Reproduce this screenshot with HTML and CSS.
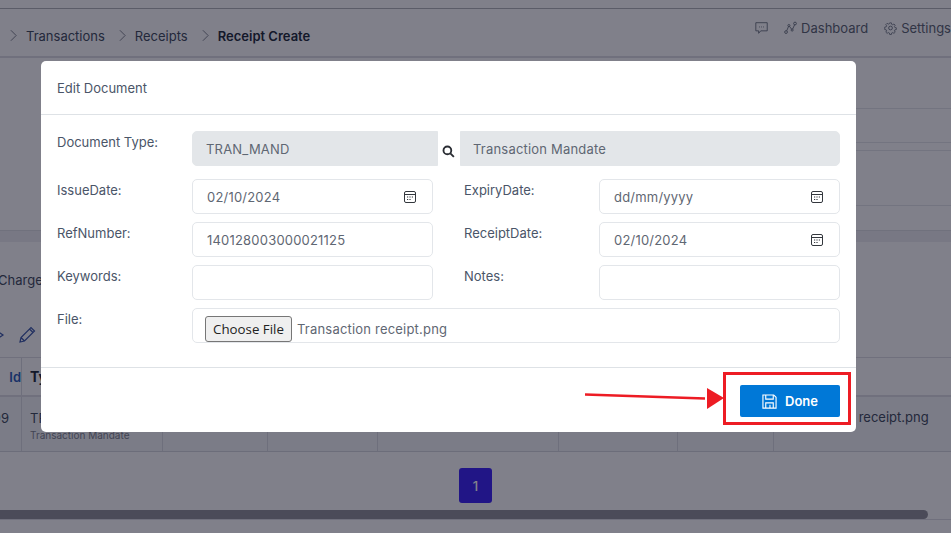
FILE: index.html
```html
<!DOCTYPE html>
<html lang="en">
<head>
<meta charset="utf-8">
<title>Receipt Create</title>
<link rel="stylesheet" href="styles.css">
</head>
<body>
<div class="page">
  <div class="topstrip"></div>
  <header class="crumbbar">
    <nav class="crumbs">
      <svg class="chev" viewBox="0 0 8 14"><path d="M1 1l6 6-6 6"/></svg><span>Transactions</span>
      <svg class="chev" viewBox="0 0 8 14"><path d="M1 1l6 6-6 6"/></svg><span>Receipts</span>
      <svg class="chev" viewBox="0 0 8 14"><path d="M1 1l6 6-6 6"/></svg><b>Receipt Create</b>
    </nav>
    <div class="tools">
      <svg class="tool chat" viewBox="0 0 16 16"><path d="M1 1.5h14v10H7l-2.5 3v-3H1z"/><path d="M5 6.700h1M7.500 6.700h1M10 6.700h1"/></svg>
      <svg class="tool dash" viewBox="0 0 16 16"><circle cx="2.500" cy="13" r="1.700"/><circle cx="13.500" cy="2.500" r="1.700"/><circle cx="6" cy="5" r="1.300"/><circle cx="10" cy="10.500" r="1.300"/><path d="M3.300 11.500L5.500 6.200M6.700 6l2.700 3.500M10.600 9.300l2.400-5.200"/></svg>
      <span>Dashboard</span>
      <svg class="tool gear" viewBox="0 0 16 16"><circle cx="8" cy="8" r="2.300"/><path d="M6.800 1h2.400l.4 2 1.400.6 1.700-1.100 1.700 1.700-1.100 1.700.6 1.400 2 .4v2.400l-2 .4-.6 1.400 1.100 1.700-1.700 1.700-1.700-1.100-1.400.6-.4 2H6.800l-.4-2-1.400-.6-1.700 1.100-1.700-1.700 1.100-1.700-.6-1.400-2-.4V6.800l2-.4.6-1.400-1.100-1.700 1.700-1.700 1.700 1.100 1.400-.6z" transform="translate(.8 .8) scale(.9)"/></svg>
      <span class="nowrap">Settings</span>
    </div>
  </header>
  <section class="formsec">
    <div class="fline h1"></div>
    <div class="fline h2"></div>
    <div class="fline h3"></div>
    <div class="fline h4"><span class="clip-label">Location:</span></div>
    <div class="h5"></div>
  </section>
  <div class="band"></div>
  <section class="lower">
    <div class="tabs"><span>Charges</span></div>
    <div class="actions">
      <svg class="chevsmall" viewBox="0 0 6 10"><path d="M-3 1l6 4-6 4"/></svg>
      <svg class="pencil" viewBox="0 0 18 18"><path d="M2 16l1-4.500L13 1.500l3.500 3.500-10 10zM11.500 3l3.500 3.500M3 11.500L6.500 15"/></svg>
    </div>
    <div class="grid">
      <div class="trow thead">
        <div class="cell idc"><a>Id</a></div><div class="cell type"><b>Type</b></div><div class="cell"></div><div class="cell"></div><div class="cell"></div><div class="cell"></div><div class="cell"></div><div class="cell last"></div>
      </div>
      <div class="trow tbody">
        <div class="cell idc">1099</div><div class="cell type">TRAN_MAND<small>Transaction Mandate</small></div><div class="cell"></div><div class="cell"></div><div class="cell"></div><div class="cell"></div><div class="cell"></div><div class="cell last fname">Transaction receipt.png</div>
      </div>
    </div>
    <div class="pager"><span class="pg">1</span></div>
    <div class="scroll"><div class="thumb"></div></div>
  </section>
</div>

<div class="overlay"></div>

<div class="modal">
  <div class="mhead">Edit Document</div>
  <div class="mbody">
    <div class="frow first">
      <label class="lbl">Document Type:</label>
      <input class="inp ro code" value="TRAN_MAND" readonly>
      <svg class="search" viewBox="0 0 14 14"><circle cx="5.800" cy="5.800" r="4.200"/><path d="M9 9l3.800 3.800"/></svg>
      <input class="inp ro desc" value="Transaction Mandate" readonly>
    </div>
    <div class="frow">
      <label class="lbl">IssueDate:</label>
      <div class="inp field"><span>02/10/2024</span><svg class="cal" viewBox="0 0 14 14"><rect x="1.500" y="1.500" width="11" height="11" rx="1.500"/><path d="M1.500 4.500h11"/><path class="dots" d="M4 7h1.200M6.400 7h1.200M8.800 7H10M4 9.500h1.200M6.400 9.500h1.200"/></svg></div>
      <label class="lbl right">ExpiryDate:</label>
      <div class="inp field narrow"><span>dd/mm/yyyy</span><svg class="cal" viewBox="0 0 14 14"><rect x="1.500" y="1.500" width="11" height="11" rx="1.500"/><path d="M1.500 4.500h11"/><path class="dots" d="M4 7h1.200M6.400 7h1.200M8.800 7H10M4 9.500h1.200M6.400 9.500h1.200"/></svg></div>
    </div>
    <div class="frow">
      <label class="lbl">RefNumber:</label>
      <input class="inp text" value="140128003000021125">
      <label class="lbl right">ReceiptDate:</label>
      <div class="inp field narrow"><span>02/10/2024</span><svg class="cal" viewBox="0 0 14 14"><rect x="1.500" y="1.500" width="11" height="11" rx="1.500"/><path d="M1.500 4.500h11"/><path class="dots" d="M4 7h1.200M6.400 7h1.200M8.800 7H10M4 9.500h1.200M6.400 9.500h1.200"/></svg></div>
    </div>
    <div class="frow">
      <label class="lbl">Keywords:</label>
      <input class="inp text">
      <label class="lbl right">Notes:</label>
      <input class="inp text narrow">
    </div>
    <div class="frow">
      <label class="lbl">File:</label>
      <div class="inp file"><button class="choose" type="button">Choose File</button><span>Transaction receipt.png</span></div>
    </div>
  </div>
  <div class="mfoot">
    <button class="done" type="button">
      <svg class="disk" viewBox="0 0 16 16"><path d="M1 1h11.500L15 3.500V15H1z"/><path d="M4 1v4.500h8V1M4 15V9.500h8V15M8.500 11.500V15"/></svg>
      Done
    </button>
  </div>
</div>

<div class="redbox"></div>
<svg class="arrow" viewBox="0 0 140 24"><path d="M0 6.500L120 10.500" /><polygon points="122,0 139,10 122,21"/></svg>
</body>
</html>
```

FILE: styles.css
```css
* { box-sizing: border-box; }
html, body { margin: 0; height: 100%; }
body { width: 951px; height: 533px; overflow: hidden; position: relative; font-family: Inter, "Liberation Sans", sans-serif; font-size: 13px; color: #3f4a5f; background: #f8f9fd; }
.page { width: 951px; height: 533px; overflow: hidden; }

.topstrip { height: 9px; border-bottom: 1px solid #aeb0b8; }
.crumbbar { height: 49px; border-bottom: 2px solid #d8d9e2; display: flex; justify-content: space-between; padding: 0 0 0 10px; position: relative; }
.crumbs { display: flex; align-items: center; height: 47px; margin-top: 3px; font-size: 13px; }
.crumbs span { margin: 0 14px 0 9px; }
.crumbs b { margin-left: 9px; font-weight: 600; color: #1f2a3d; }
.chev { width: 7px; height: 13px; fill: none; stroke: #6f7482; stroke-width: 1; }
.tools { display: flex; align-items: center; height: 47px; margin-top: -5px; white-space: nowrap; width: 196px; margin-right: 0; color: #5a6273; }
.tool { width: 16px; height: 16px; fill: none; stroke: #5a6273; stroke-width: 1; }
.chat { margin-right: 16px; }
.dash { margin-right: 4px; }
.gear { margin-left: 16px; margin-right: 4px; }
.nowrap { white-space: nowrap; }

.formsec { height: 173px; border-bottom: 1px solid #d9dae3; display: flex; flex-direction: column; }
.fline { border-bottom: 1px solid #dfe0e8; margin-left: 500px; }
.h1 { height: 51px; }
.h2 { height: 34px; }
.h3 { height: 9px; }
.h4 { height: 55px; position: relative; }
.h5 { height: 24px; }
.clip-label { display: none; }
.band { height: 11px; background: #e9e9f0; }

.lower { height: 291px; display: flex; flex-direction: column; }
.tabs { height: 60px; overflow: hidden; padding: 30px 0 0; }
.tabs span { display: block; margin-left: -2px; }
.actions { height: 55px; display: flex; align-items: center; padding-top: 11px; }
.chevsmall { width: 6px; height: 10px; fill: none; stroke: #3a56a8; stroke-width: 1.200; }
.pencil { width: 18px; height: 18px; margin-left: 12px; fill: none; stroke: #3a56a8; stroke-width: 1.200; }
.grid { border-top: 1px solid #d8d9e2; }
.trow { display: grid; grid-template-columns: 22px 141px 105px 110px 181px 119px 96px 177px; }
.thead { height: 39px; border-bottom: 2px solid #d8d9e2; }
.tbody { height: 55px; border-bottom: 1px solid #d0d2dc; background: #eef0f6; }
.cell { border-right: 1px solid #d4d6e0; white-space: nowrap; overflow: hidden; }
.cell.last { border-right: 0; }
.thead .cell { display: flex; align-items: center; }
.idc { direction: rtl; text-align: left; }
.thead .idc a { color: #2a5cb8; font-weight: 600; }
.tbody .idc { padding-top: 13px; padding-right: 12px; }
.type { padding-left: 8px; }
.thead .type b { color: #1f2a3d; font-weight: 700; font-size: 14px; }
.tbody .type { padding-top: 13px; line-height: 16px; }
.type small { display: block; font-size: 10px; line-height: 14px; margin-top: 2px; color: #7b8190; }
.fname { padding: 12px 0 0 9px; }
.pager { height: 55px; display: flex; justify-content: center; padding-top: 16px; }
.pg { width: 33px; height: 35px; margin-left: 0; border-radius: 3px; background: #3a22f5; color: #fff; display: flex; align-items: center; justify-content: center; font-size: 13px; font-weight: 500; }
.scroll { height: 13px; padding-top: 3px; border-bottom: 1px solid #d8d9e2; margin-top: 0; }
.thumb { width: 928px; height: 9px; border-radius: 0 5px 5px 0; background: #8f8f9a; }

.overlay { position: absolute; inset: 0; background: rgba(8, 8, 24, .5); }

.modal { position: absolute; left: 41px; top: 61px; width: 815px; height: 371px; background: #fff; border-radius: 5px; display: flex; flex-direction: column; }
.mhead { height: 54px; border-bottom: 1px solid #dee2e6; padding: 19px 16px 0; line-height: 16px; color: #4a5568; }
.mbody { height: 253px; padding: 16px 16px 0; display: flex; flex-direction: column; gap: 8px; border-bottom: 1px solid #dee2e6; }
.frow { display: flex; height: 35px; }
.frow.first { margin-bottom: 5px; }
.lbl { width: 135px; flex: none; padding-top: 3px; line-height: 16px; color: #4a5568; }
.lbl.right { width: 135px; margin-left: 31px; }
.inp { height: 35px; border: 1px solid #e3e6ea; border-radius: 5px; font: inherit; color: #5f6773; background: #fff; outline: 0; padding: 0 14px; letter-spacing: .2px; }
.ro { background: #e3e6e9; border-color: #e3e6e9; }
.code { width: 246px; border-radius: 5px 0 0 5px; padding: 0 13px; }
.search { width: 13px; height: 13px; margin: 14px 5px 0 4px; flex: none; fill: none; stroke: #2a2d33; stroke-width: 2; }
.desc { width: 380px; border-radius: 0 5px 5px 0; padding: 0 12px; }
.text { width: 241px; }
.field { width: 241px; display: flex; align-items: center; justify-content: space-between; padding-right: 15px; }
.narrow { width: 241px; }
.cal { width: 14px; height: 14px; fill: none; stroke: #33373d; stroke-width: 1; }
.cal .dots { stroke-width: 1.200; }
.file { width: 648px; display: flex; align-items: flex-end; padding: 0 12px; }
.choose { width: 87px; height: 26px; margin-bottom: 0; padding: 0; border: 1px solid #767676; border-radius: 3px; background: #efefef; color: #222; font: 13.300px "Open Sans", sans-serif; }
.file span { margin-left: 5px; line-height: 26px; }
.mfoot { flex: 1; display: flex; justify-content: flex-end; padding: 17px 16px 0; }
.done { width: 100px; height: 32px; border: 0; border-radius: 2px; background: #0078d7; color: #fff; font: 600 13px Inter, sans-serif; display: flex; align-items: center; justify-content: center; gap: 8px; }
.disk { width: 15px; height: 15px; fill: none; stroke: #fff; stroke-width: 1.200; }

.redbox { position: absolute; left: 723px; top: 372px; width: 128px; height: 53px; border: 3px solid #ed1c24; }
.arrow { position: absolute; left: 585px; top: 388px; width: 140px; height: 24px; }
.arrow path { stroke: #ed1c24; stroke-width: 2.500; fill: none; }
.arrow polygon { fill: #ed1c24; }
```
